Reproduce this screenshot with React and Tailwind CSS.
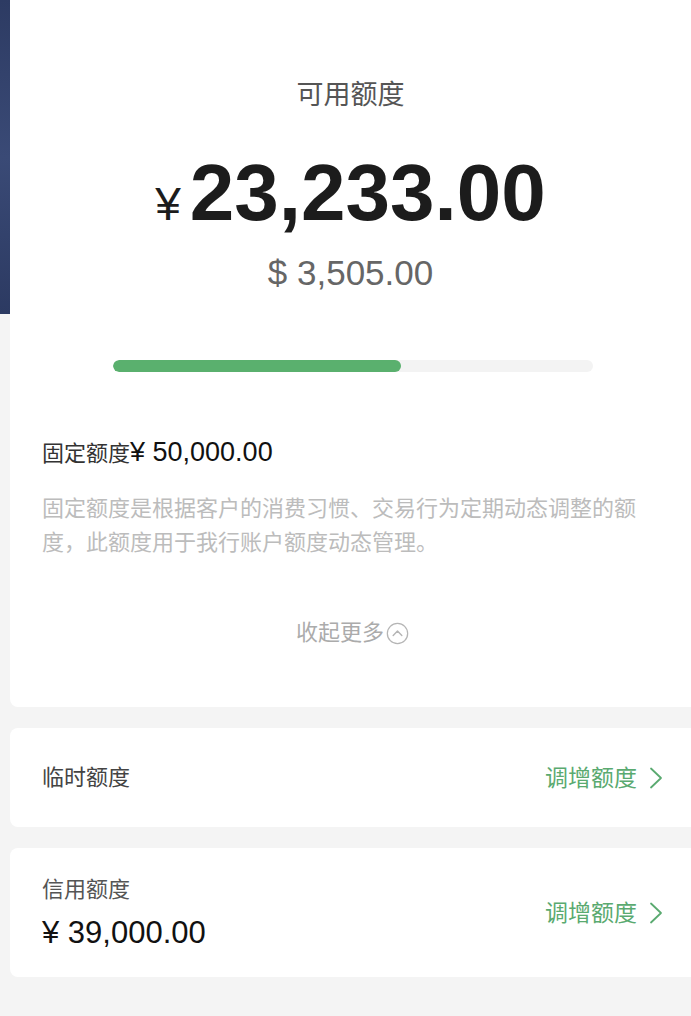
import React from "react";

const font = "font-['Liberation_Sans','Noto_Sans_CJK_SC',sans-serif]";

function Chevron() {
  return (
    <svg width="14" height="24" viewBox="0 0 14 24" fill="none" className="ml-[12px]">
      <path d="M2 2.5 L12 12 L2 21.5" stroke="#5aaa70" strokeWidth="1.8" strokeLinecap="round" strokeLinejoin="round" />
    </svg>
  );
}

function RaiseLink() {
  return (
    <div className="flex items-center text-[23px] leading-[30px] text-[#5aaa70]">
      调增额度
      <Chevron />
    </div>
  );
}

function App() {
  return (
    <div className={`relative min-h-[1016px] overflow-hidden bg-[#f4f4f4] ${font}`}>
      {/* header backdrop peeking behind the main card */}
      <div className="absolute left-0 top-0 h-[314px] w-full bg-gradient-to-b from-[#2d3b63] via-[#3a4a76] to-[#2c3a62]" />

      <div className="relative flex flex-col gap-[21px] pl-[10px]">
        {/* available amount card */}
        <div className="h-[707px] rounded-bl-[8px] bg-white pl-[32px] pr-[28px]">
          <div className="pr-[4px] pt-[77px] text-center">
            <div className="text-[27px] leading-[36px] text-[#555]">可用额度</div>
            <div className="mt-[40px] flex items-baseline justify-center text-[#1c1c1c]">
              <span className="mr-[9px] text-[46px] leading-[80px]">¥</span>
              <span className="text-[80px] font-bold leading-[80px]">23,233.00</span>
            </div>
            <div className="mt-[9px] text-[35px] leading-[40px] text-[#666]">$ 3,505.00</div>
          </div>

          <div className="mx-auto mt-[67px] h-[12px] w-[480px] overflow-hidden rounded-full bg-[#f3f3f3]">
            <div className="h-full w-[60%] rounded-full bg-[#5ab06e]" />
          </div>

          <div className="mt-[63px] flex items-baseline leading-[34px]">
            <span className="text-[22px] text-[#333]">固定额度</span>
            <span className="text-[27px] text-[#111]">¥ 50,000.00</span>
          </div>
          <p className="mt-[21px] w-[600px] text-[22px] leading-[34px] text-[#bcbcbc]">
            固定额度是根据客户的消费习惯、交易行为定期动态调整的额度，此额度用于我行账户额度动态管理。
          </p>

          <div className="mt-[58px] flex items-center justify-center text-[22px] leading-[30px] text-[#ababab]">
            收起更多
            <svg width="23" height="23" viewBox="0 0 24 24" fill="none" className="ml-[2px]">
              <circle cx="12" cy="12" r="10.6" stroke="#b5b5b5" strokeWidth="1.3" />
              <path d="M7.5 14 L12 9.5 L16.5 14" stroke="#b5b5b5" strokeWidth="1.5" strokeLinecap="round" strokeLinejoin="round" />
            </svg>
          </div>
        </div>

        {/* temporary amount */}
        <div className="flex h-[99px] items-center justify-between rounded-l-[8px] bg-white pl-[32px] pr-[28px]">
          <span className="text-[22px] leading-[30px] text-[#444]">临时额度</span>
          <RaiseLink />
        </div>

        {/* credit amount */}
        <div className="flex h-[129px] items-center justify-between rounded-l-[8px] bg-white pl-[32px] pr-[28px]">
          <div className="flex flex-col">
            <span className="text-[22px] leading-[30px] text-[#555]">信用额度</span>
            <span className="mt-[10px] text-[31px] leading-[36px] text-[#111]">¥ 39,000.00</span>
          </div>
          <RaiseLink />
        </div>
      </div>
    </div>
  );
}

export default App;
